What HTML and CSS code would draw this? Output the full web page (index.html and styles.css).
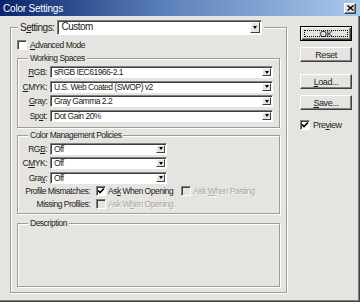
FILE: index.html
```html
<!DOCTYPE html>
<html lang="en">
<head>
    <meta charset="UTF-8">
    <meta name="viewport" content="width=device-width, initial-scale=1.0">
    <title>Color Settings</title>
    <link rel="stylesheet" href="styles.css">
</head>
<body>
    <div class="window">
        <div class="titlebar">
            <span>Color Settings</span>
            <button class="close">
                <svg width="7" height="6" viewBox="0 0 7 6"><path d="M0.5 0.5L6.5 5.5M6.5 0.5L0.5 5.5" stroke="#000" stroke-width="1.4"/></svg>
            </button>
        </div>

        <div class="content">
            <fieldset class="main-group">
                <legend class="settings-row">
                    <span>S<u>e</u>ttings:</span>
                    <div class="combo combo-big">
                        <span class="value">Custom</span>
                        <span class="arrow"></span>
                    </div>
                </legend>

                <div class="check-row">
                    <span class="check"></span>
                    <span><u>A</u>dvanced Mode</span>
                </div>

                <!-- Working Spaces -->
                <fieldset class="group spaces">
                    <legend class="group-title">Working Spaces</legend>
                    <div class="fields">
                        <label><u>R</u>GB:</label>
                        <div class="combo"><span class="value">sRGB IEC61966-2.1</span><span class="arrow"></span></div>
                        <label><u>C</u>MYK:</label>
                        <div class="combo"><span class="value">U.S. Web Coated (SWOP) v2</span><span class="arrow"></span></div>
                        <label><u>G</u>ray:</label>
                        <div class="combo"><span class="value">Gray Gamma 2.2</span><span class="arrow"></span></div>
                        <label>Sp<u>o</u>t:</label>
                        <div class="combo"><span class="value">Dot Gain 20%</span><span class="arrow"></span></div>
                    </div>
                </fieldset>

                <!-- Color Management Policies -->
                <fieldset class="group policies">
                    <legend class="group-title">Color Management Policies</legend>
                    <div class="fields short">
                        <label>RG<u>B</u>:</label>
                        <div class="combo"><span class="value">Off</span><span class="arrow"></span></div>
                        <label>C<u>M</u>YK:</label>
                        <div class="combo"><span class="value">Off</span><span class="arrow"></span></div>
                        <label>Gra<u>y</u>:</label>
                        <div class="combo"><span class="value">Off</span><span class="arrow"></span></div>
                    </div>
                    <div class="policy-row first">
                        <span class="policy-label">Profile Mismatches:</span>
                        <span class="check checked">
                            <svg width="8" height="8" viewBox="0 0 8 8"><path d="M1 3.5L3 5.5L7 1.5" fill="none" stroke="#000" stroke-width="1.7"/></svg>
                        </span>
                        <span class="policy-text">As<u>k</u> When Opening</span>
                        <span class="check disabled second"></span>
                        <span class="policy-text off">Ask <u>W</u>hen Pasting</span>
                    </div>
                    <div class="policy-row">
                        <span class="policy-label">Missing Profiles:</span>
                        <span class="check disabled"></span>
                        <span class="policy-text off">Ask W<u>h</u>en Opening</span>
                    </div>
                </fieldset>

                <!-- Description -->
                <fieldset class="group description">
                    <legend class="group-title">Description</legend>
                    <div class="description-body"></div>
                </fieldset>
            </fieldset>

            <div class="side">
                <button class="btn default"><span>OK</span></button>
                <button class="btn reset">Reset</button>
                <button class="btn load"><u>L</u>oad...</button>
                <button class="btn save"><u>S</u>ave...</button>
                <div class="check-row preview">
                    <span class="check checked">
                        <svg width="8" height="8" viewBox="0 0 8 8"><path d="M1 3.5L3 5.5L7 1.5" fill="none" stroke="#000" stroke-width="1.7"/></svg>
                    </span>
                    <span>Pre<u>v</u>iew</span>
                </div>
            </div>
        </div>
    </div>
</body>
</html>
```

FILE: styles.css
```css
* {
    margin: 0;
    padding: 0;
    box-sizing: border-box;
}

:root {
    --face: #e5e4e0;
    --text: #1c1c1c;
    --disabled: #aaa9a5;
    --light: #ffffff;
    --shadow: #9d9c97;
    --dark: #404040;
    --title-left: #0a246a;
    --title-right: #a9c8ec;
}

body {
    background: var(--face);
    font-family: "Liberation Sans", Arial, sans-serif;
    font-size: 8.5px;
    letter-spacing: -0.5px;
    color: var(--text);
}

u {
    text-decoration-thickness: 1px;
    text-underline-offset: 1px;
}

.window {
    width: 360px;
    height: 302px;
    display: flex;
    flex-direction: column;
    box-shadow: inset -1px -1px 0 var(--dark), inset -2px -2px 0 #808080;
}

/* Barra de titulo */
.titlebar {
    height: 16px;
    display: flex;
    align-items: center;
    justify-content: space-between;
    padding: 0 4px 0 3px;
    background: linear-gradient(to right, var(--title-left), #5a7fb8 45%, var(--title-right));
    color: var(--light);
    font-size: 10px;
    letter-spacing: -0.2px;
}

.close {
    width: 12px;
    height: 11px;
    display: flex;
    align-items: center;
    justify-content: center;
    background: var(--face);
    border: 1px solid;
    border-color: var(--light) var(--dark) var(--dark) var(--light);
    box-shadow: inset -1px -1px 0 #808080;
}

.content {
    display: flex;
    padding: 4px 0 0 10px;
}

/* Grupos */
fieldset {
    border: 1px solid var(--shadow);
    box-shadow: 1px 1px 0 var(--light), inset 1px 1px 0 var(--light);
}

legend {
    background: var(--face);
}

.main-group {
    width: 277px;
    padding: 5px 6px 5px 6px;
}

.settings-row {
    display: flex;
    align-items: center;
    gap: 3px;
    height: 15px;
    margin-left: 1px;
    padding: 0 2px;
    font-size: 10px;
}

.check-row {
    display: flex;
    align-items: center;
    gap: 3px;
    height: 10px;
}

.check {
    width: 10px;
    height: 10px;
    display: flex;
    align-items: center;
    justify-content: center;
    background: var(--light);
    border: 1px solid;
    border-color: #808080 var(--light) var(--light) #808080;
    box-shadow: inset 1px 1px 0 var(--dark);
}

.check.disabled {
    background: var(--face);
}

.group {
    padding: 3px 6px 5px 0;
}

.group-title {
    margin-left: 10px;
    padding: 0 2px;
    height: 9px;
    line-height: 9px;
}

.spaces {
    margin-top: 4px;
}

.policies {
    margin-top: 3px;
    padding-bottom: 4px;
}

.description {
    margin-top: 5px;
    padding: 0;
}

.description-body {
    height: 58px;
}

.fields {
    display: grid;
    grid-template-columns: 29px 223px;
    column-gap: 3px;
    row-gap: 2.5px;
    align-items: center;
}

.fields.short {
    grid-template-columns: 29px 117px;
}

.fields label {
    text-align: right;
}

/* Listas desplegables */
.combo {
    height: 12px;
    display: flex;
    align-items: stretch;
    background: var(--light);
    border: 1px solid;
    border-color: #808080 var(--light) var(--light) #808080;
    box-shadow: inset 1px 1px 0 var(--dark);
}

.combo .value {
    flex: 1;
    padding: 1px 0 0 3px;
    line-height: 9px;
    white-space: nowrap;
    overflow: hidden;
}

.arrow {
    width: 9px;
    margin: 1px 1px 1px 0;
    background: var(--face);
    border: 1px solid;
    border-color: var(--light) var(--dark) var(--dark) var(--light);
    display: flex;
    align-items: center;
    justify-content: center;
}

.arrow::after {
    content: "";
    border-left: 2.5px solid transparent;
    border-right: 2.5px solid transparent;
    border-top: 3px solid #000;
}

.combo-big {
    width: 205px;
    height: 15px;
}

.combo-big .value {
    padding: 0 0 0 3px;
    line-height: 11px;
}

.combo-big .arrow {
    width: 10px;
}

.policy-row {
    display: flex;
    align-items: center;
    height: 10px;
    margin-top: 3px;
}

.policy-row.first {
    margin-top: 2px;
}

.policy-label {
    width: 72px;
    margin-right: 6px;
    text-align: right;
}

.policy-text {
    margin-left: 2px;
}

.policy-text.off {
    color: var(--disabled);
    text-shadow: 1px 1px 0 rgba(255, 255, 255, 0.7);
}

.check.second {
    margin-left: 8px;
}

/* Botones */
.side {
    width: 52px;
    margin-left: 13px;
    display: flex;
    flex-direction: column;
}

.btn {
    height: 15px;
    font-family: inherit;
    font-size: 9px;
    letter-spacing: -0.4px;
    color: var(--text);
    background: var(--face);
    border: 1px solid;
    border-color: var(--light) var(--dark) var(--dark) var(--light);
    box-shadow: inset -1px -1px 0 #808080;
}

.btn.default {
    margin-top: 6px;
    position: relative;
    border: 1px solid #000;
    box-shadow: inset 1px 1px 0 var(--light), inset -1px -1px 0 var(--dark), inset -2px -2px 0 #808080;
    font-size: 9.5px;
}

.btn.default::after {
    content: "";
    position: absolute;
    inset: 3px;
    border: 1px dotted #000;
}

.reset {
    margin-top: 6px;
}

.load {
    margin-top: 12px;
}

.save {
    margin-top: 6px;
}

.preview {
    margin-top: 10px;
    font-size: 9px;
}
```
